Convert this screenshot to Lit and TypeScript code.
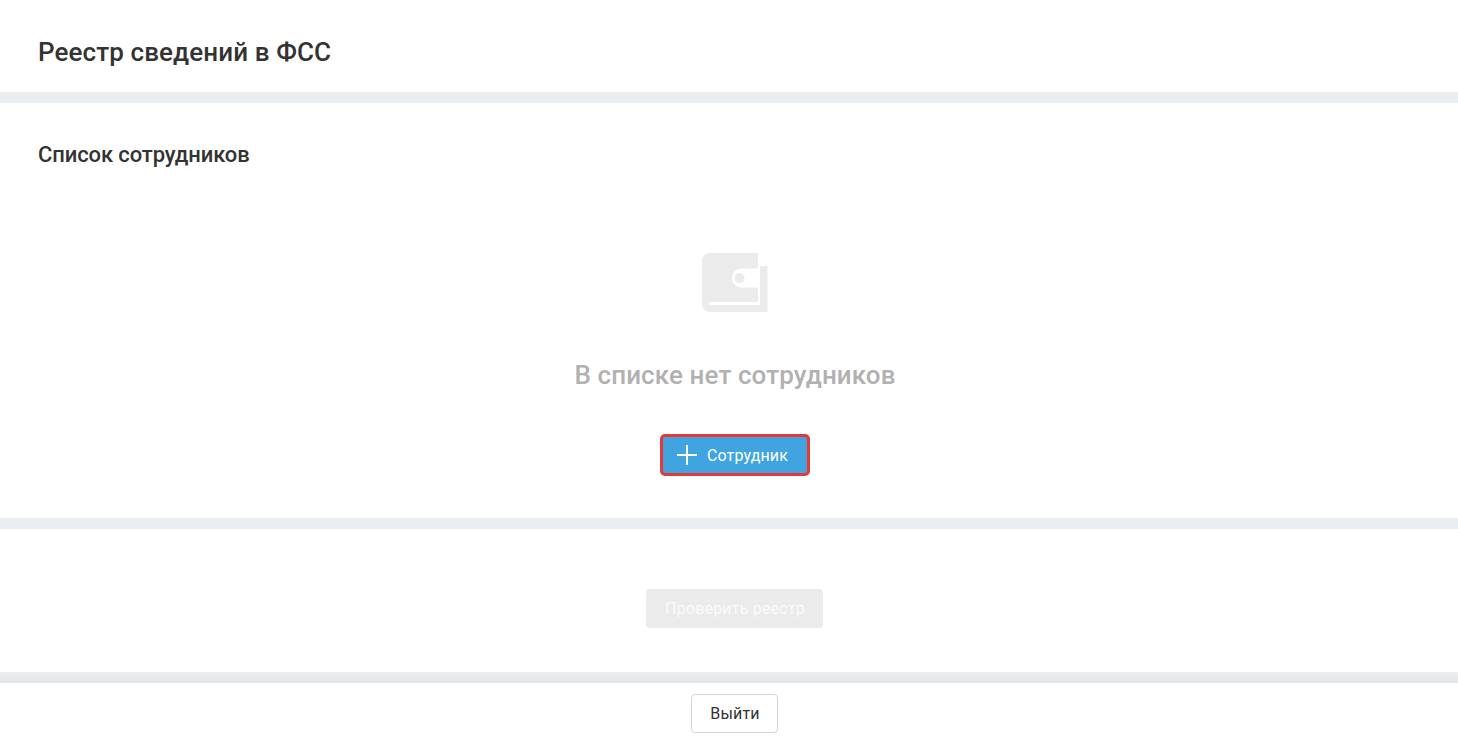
import { LitElement, html, css } from "lit";
import { customElement } from "lit/decorators.js";

@customElement("app-root")
export class AppRoot extends LitElement {
  static styles = css`
    :host { display: block; font-family: Roboto, "Liberation Sans", sans-serif; color: #333; background: #fff; height: 739px; overflow: hidden; }
    .head { height: 92px; box-sizing: border-box; padding: 0 38px; display: flex; align-items: center; }
    h1 { margin: 0; font-size: 26px; font-weight: 500; line-height: 32px; letter-spacing: 0.1px; position: relative; top: 6px; }
    .div { height: 11px; background: #ebeef1; }
    .div.last { background: linear-gradient(#ebedef, #e3e5e8); }
    .list { height: 415px; box-sizing: border-box; padding: 39px 0 0 12px; display: flex; flex-direction: column; }
    h2 { margin: 0 0 0 26px; font-size: 22px; font-weight: 500; line-height: 26px; letter-spacing: -0.11px; }
    .empty { display: flex; flex-direction: column; align-items: center; }
    .wallet { margin-top: 85px; display: block; }
    .msg { margin-top: 47px; font-size: 26px; font-weight: 500; line-height: 32px; letter-spacing: 0.09px; color: #b2b0b0; }
    .add { margin-top: 43px; box-sizing: border-box; width: 150px; height: 42px; border: 3px solid #e53935; border-radius: 5px; background: #3fa4e0; color: #fff; display: flex; align-items: center; gap: 10px; padding: 0 0 0 14px; font: 400 16px Roboto, sans-serif; letter-spacing: 0.12px; }
    .check-wrap { height: 143px; display: flex; justify-content: center; padding: 60px 0 0 10px; box-sizing: border-box; }
    .check { box-sizing: border-box; width: 177px; height: 39px; padding: 0 0 0 2px; background: #ebebeb; border: 0; border-radius: 4px; color: #fafafa; font: 400 16px Roboto, sans-serif; letter-spacing: 0.2px; }
    .foot { display: flex; justify-content: center; padding: 11px 0 0 10px; }
    .exit { box-sizing: border-box; width: 87px; height: 39px; padding: 0 0 0 2px; background: #fff; border: 1px solid #d5d5d5; border-radius: 4px; color: #333; font: 400 16px Roboto, sans-serif; letter-spacing: 0.2px; }
  `;

  render() {
    return html`
      <div class="head"><h1>Реестр сведений в ФСС</h1></div>
      <div class="div"></div>
      <section class="list">
        <h2>Список сотрудников</h2>
        <div class="empty">
          <svg class="wallet" width="66" height="59" viewBox="0 0 66 59" aria-hidden="true">
            <path fill="#ebebeb" fill-rule="evenodd" d="M8 0H56V15.5H39.5a9.5 9.5 0 0 0 0 19H56V49H7V52H58V13H65.5V59H8a8 8 0 0 1-8-8V8a8 8 0 0 1 8-8Z"/>
            <circle cx="37.5" cy="25" r="5" fill="#ebebeb"/>
          </svg>
          <div class="msg">В списке нет сотрудников</div>
          <button class="add">
            <svg width="20" height="20" viewBox="0 0 20 20" aria-hidden="true"><path d="M10 0V20M0 10H20" stroke="#fff" stroke-width="2"/></svg>
            <span>Сотрудник</span>
          </button>
        </div>
      </section>
      <div class="div"></div>
      <section class="check-wrap"><button class="check">Проверить реестр</button></section>
      <div class="div last"></div>
      <footer class="foot"><button class="exit">Выйти</button></footer>
    `;
  }
}
